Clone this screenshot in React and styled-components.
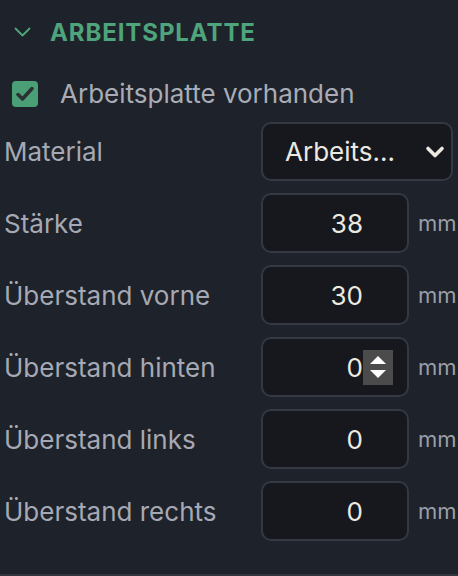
import React from 'react'
import styled, { createGlobalStyle } from 'styled-components'

const GlobalStyle = createGlobalStyle`
  html, body {
    margin: 0;
    padding: 0;
    background: #1e222a;
    font-family: Inter, "Noto Sans", sans-serif;
  }
`

const Panel = styled.div`
  width: 458px;
  height: 574px;
  overflow: hidden;
  border-bottom: 2px solid #2f343e;
  background: #1e222a;
`

const Header = styled.div`
  display: flex;
  align-items: center;
  gap: 19px;
  height: 30px;
  padding: 17px 0 0 14px;
  color: #4ea57c;
  font-size: 24px;
  font-weight: 700;
  letter-spacing: 0.9px;
`

const CheckRow = styled.label`
  display: flex;
  align-items: center;
  gap: 22px;
  margin: 31px 0 0 12px;
  color: #a9acb6;
  font-size: 26px;
`

const CheckBox = styled.span`
  display: flex;
  align-items: center;
  justify-content: center;
  width: 26px;
  height: 26px;
  border-radius: 4px;
  background: #4a9f77;
`

const Fields = styled.div`
  display: flex;
  flex-direction: column;
  gap: 12px;
  margin-top: 13px;
  padding-left: 4px;
`

const Row = styled.div`
  display: flex;
  align-items: center;
  gap: 9px;
  white-space: nowrap;
`

const Label = styled.span`
  flex: 0 0 248px;
  color: #a6a9b3;
  font-size: 26px;
`

const Select = styled.div`
  flex: 0 0 192px;
  height: 59px;
  box-sizing: border-box;
  display: flex;
  align-items: center;
  justify-content: space-between;
  padding: 0 6px 0 22px;
  border: 2px solid #333843;
  border-radius: 10px;
  background: #16181d;
  color: #ece9e1;
  font-size: 26px;
`

const InputBox = styled.div`
  flex: 0 0 148px;
  min-width: 0;
  display: flex;
  align-items: center;
  height: 60px;
  box-sizing: border-box;
  padding: 0 14px 0 12px;
  border: 2px solid #333843;
  border-radius: 10px;
  background: #16181d;
`

const NumberText = styled.input`
  flex: 1;
  width: 0;
  min-width: 0;
  border: none;
  outline: none;
  background: transparent;
  padding: 0;
  color: #ece9e1;
  font-family: inherit;
  font-size: 26px;
  text-align: right;
`

const Spinner = styled.span`
  display: flex;
  flex-direction: column;
  align-items: center;
  justify-content: center;
  gap: 6px;
  width: 30px;
  height: 35px;
  flex-shrink: 0;
  background: ${p => (p.$active ? '#4b4b4b' : 'transparent')};
  visibility: ${p => (p.$active ? 'visible' : 'hidden')};
`

const Unit = styled.span`
  color: #9a9ea8;
  font-size: 22px;
`

const fields = [
  { label: 'Stärke', value: '38' },
  { label: 'Überstand vorne', value: '30' },
  { label: 'Überstand hinten', value: '0', hover: true },
  { label: 'Überstand links', value: '0' },
  { label: 'Überstand rechts', value: '0' },
]

function NumberField({ label, value, hover }) {
  return (
    <Row>
      <Label>{label}</Label>
      <InputBox>
        <NumberText type="text" defaultValue={value} />
        <Spinner $active={hover}>
          <svg width="16" height="8" viewBox="0 0 16 8">
            <path d="M8 0 L16 8 H0 Z" fill="#fff" />
          </svg>
          <svg width="16" height="8" viewBox="0 0 16 8">
            <path d="M0 0 H16 L8 8 Z" fill="#fff" />
          </svg>
        </Spinner>
      </InputBox>
      <Unit>mm</Unit>
    </Row>
  )
}

export default function App() {
  return (
    <>
      <GlobalStyle />
      <Panel>
        <Header>
          <svg width="17" height="10" viewBox="0 0 17 10" fill="none">
            <path d="M1.5 1.5 L8.5 8.5 L15.5 1.5" stroke="#4ea57c" strokeWidth="1.8" strokeLinecap="round" strokeLinejoin="round" />
          </svg>
          ARBEITSPLATTE
        </Header>
        <CheckRow>
          <CheckBox>
            <svg width="18" height="16" viewBox="0 0 18 16" fill="none">
              <path d="M2 8.5 L6.5 13 L16 2.5" stroke="#2c2f33" strokeWidth="3.4" strokeLinecap="round" strokeLinejoin="round" />
            </svg>
          </CheckBox>
          Arbeitsplatte vorhanden
        </CheckRow>
        <Fields>
          <Row>
            <Label>Material</Label>
            <Select>
              <span>Arbeits...</span>
              <svg width="20" height="14" viewBox="0 0 20 14" fill="none">
                <path d="M3 3.5 L10 10.5 L17 3.5" stroke="#ece9e1" strokeWidth="3.6" strokeLinecap="round" strokeLinejoin="round" />
              </svg>
            </Select>
          </Row>
          {fields.map(f => (
            <NumberField key={f.label} {...f} />
          ))}
        </Fields>
      </Panel>
    </>
  )
}
